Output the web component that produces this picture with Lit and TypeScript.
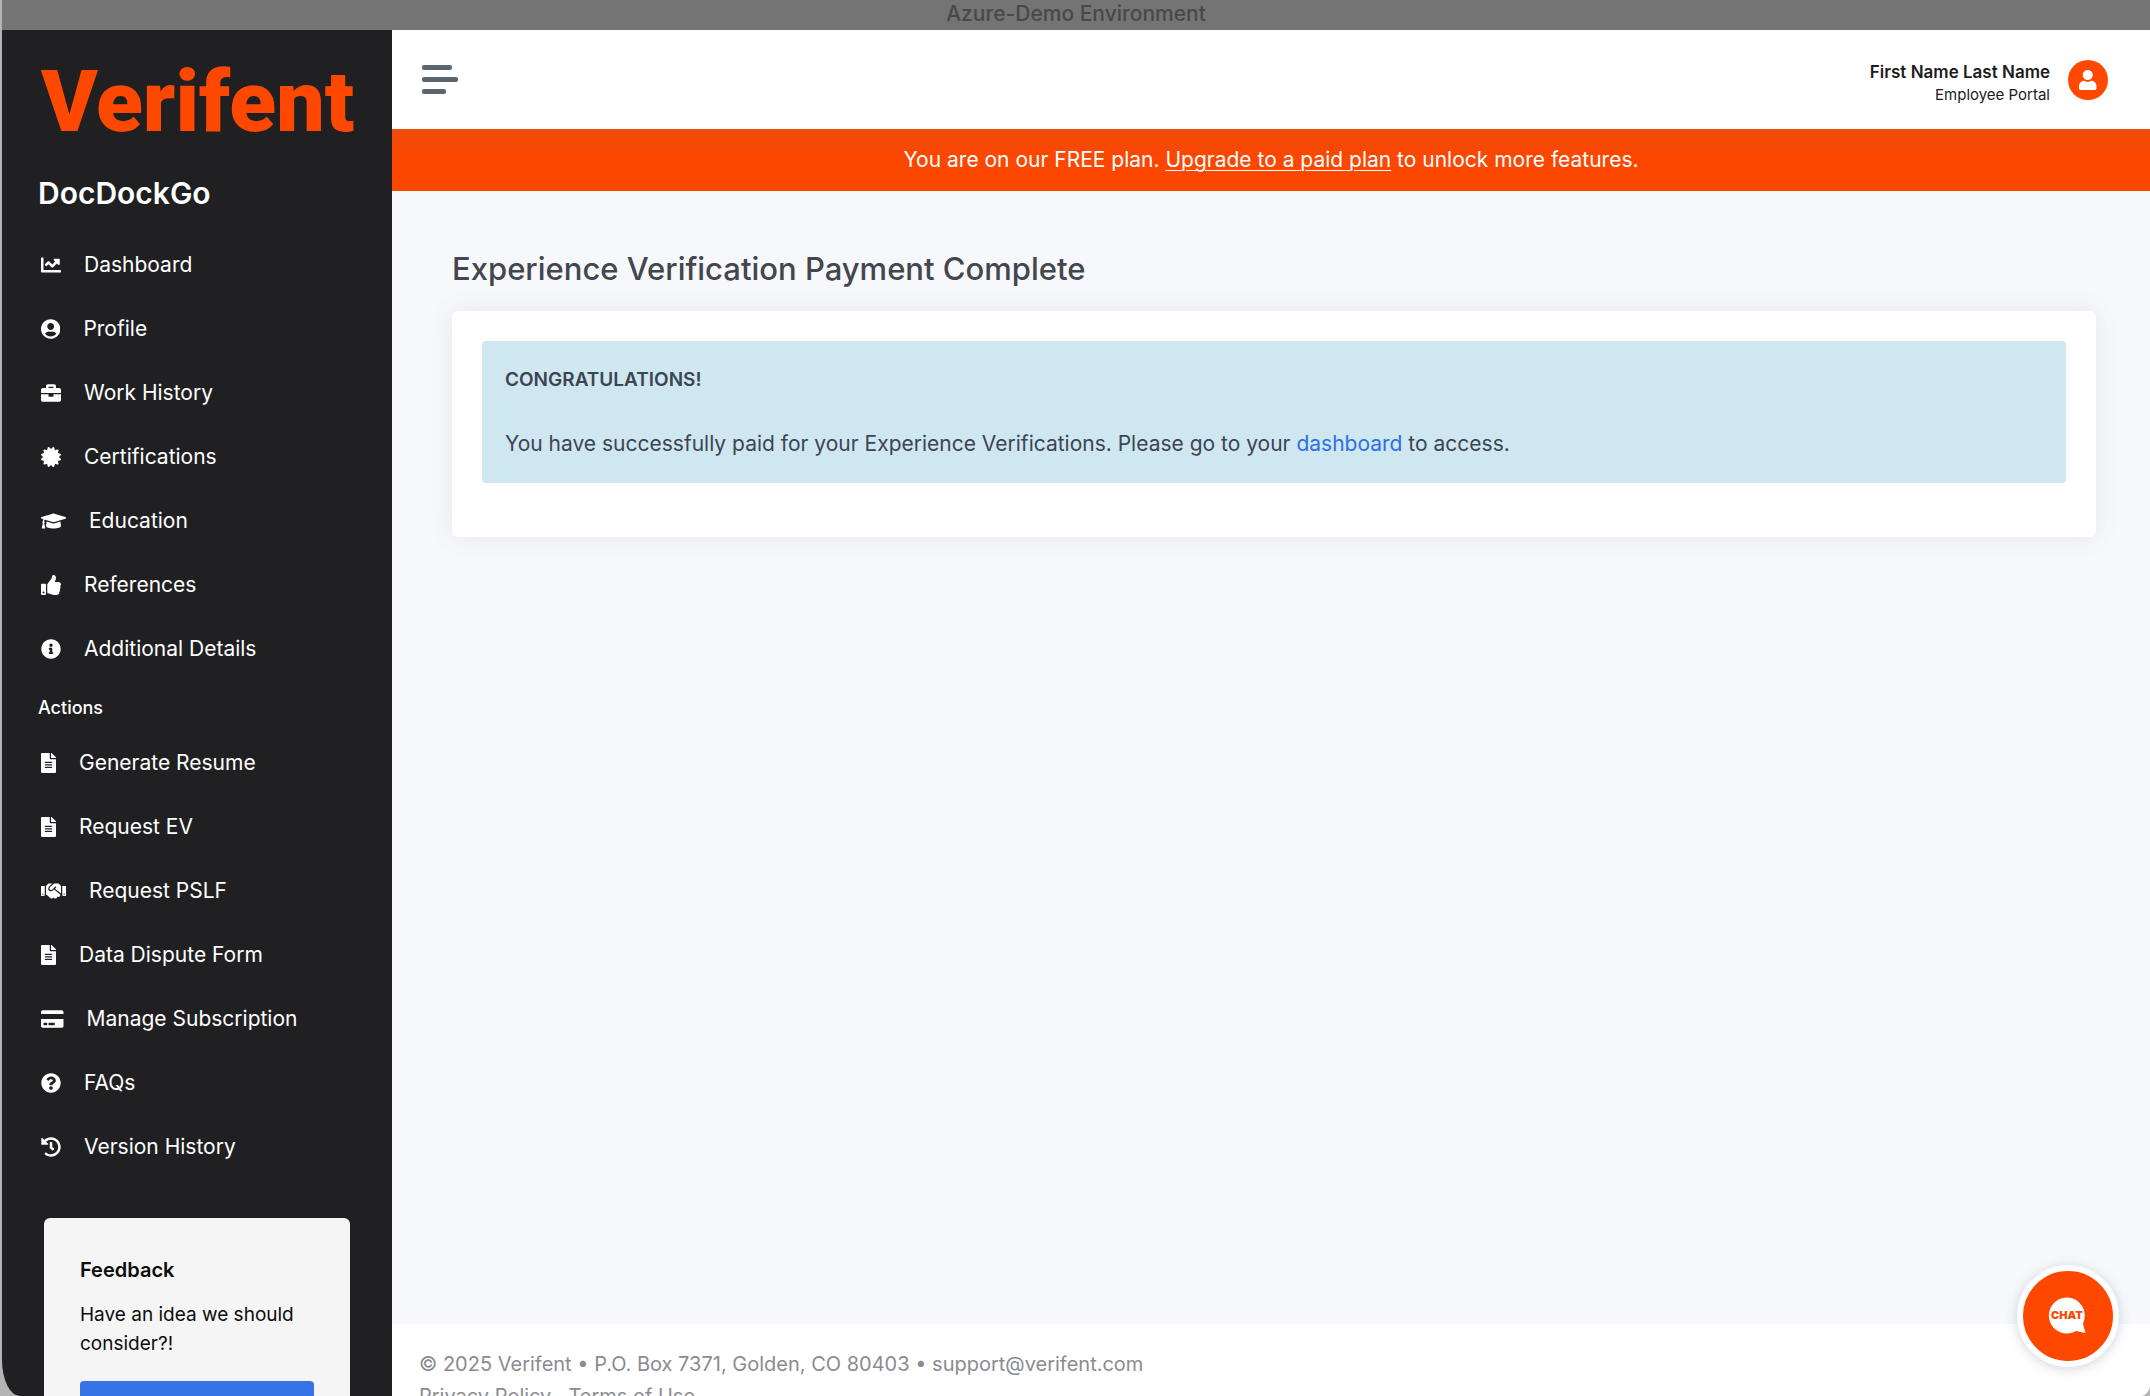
import { LitElement, html, css, svg } from "lit";
import { customElement } from "lit/decorators.js";

type Icon = { w: number; d: string };

const ICONS: Record<string, Icon> = {
  chart: { w: 512, d: "M496 384H64V80c0-8.84-7.16-16-16-16H16C7.16 64 0 71.16 0 80v336c0 17.67 14.33 32 32 32h464c8.84 0 16-7.16 16-16v-32c0-8.84-7.16-16-16-16zM464 96H345.94c-21.38 0-32.09 25.85-16.97 40.97l32.4 32.4L288 242.75l-73.37-73.37c-12.5-12.5-32.76-12.5-45.25 0l-68.69 68.69c-6.25 6.25-6.25 16.38 0 22.63l22.62 22.62c6.25 6.25 16.38 6.25 22.63 0L192 237.25l73.37 73.37c12.5 12.5 32.76 12.5 45.25 0l96-96 32.4 32.4c15.12 15.12 40.97 4.41 40.97-16.97V112c.01-8.84-7.15-16-15.99-16z" },
  profile: { w: 496, d: "M248 8C111 8 0 119 0 256s111 248 248 248 248-111 248-248S385 8 248 8zm0 96c48.6 0 88 39.4 88 88s-39.4 88-88 88-88-39.4-88-88 39.4-88 88-88zm0 344c-58.7 0-111.3-26.6-146.5-68.2 18.8-35.4 55.6-59.8 98.5-59.8 2.4 0 4.8.4 7.1 1.1 13 4.2 26.6 6.9 40.9 6.9 14.3 0 28-2.7 40.9-6.9 2.3-.7 4.7-1.1 7.1-1.1 42.9 0 79.7 24.4 98.5 59.8C359.3 421.4 306.7 448 248 448z" },
  briefcase: { w: 512, d: "M320 336c0 8.84-7.16 16-16 16h-96c-8.84 0-16-7.16-16-16v-48H0v144c0 25.6 22.4 48 48 48h416c25.6 0 48-22.4 48-48V288H320v48zm144-208h-80V80c0-25.6-22.4-48-48-48H176c-25.6 0-48 22.4-48 48v48H48c-25.6 0-48 22.4-48 48v80h512v-80c0-25.6-22.4-48-48-48zm-144 0H192V96h128v32z" },
  certificate: { w: 512, d: "M458.622 255.92l45.985-45.005c13.708-12.977 7.316-36.039-10.664-40.339l-62.65-15.99 17.661-62.015c4.991-17.838-11.829-34.663-29.661-29.671l-61.994 17.667-15.984-62.671C337.085.197 313.765-6.276 300.99 7.228L256 53.57 211.011 7.229c-12.63-13.351-36.047-7.234-40.325 10.668l-15.984 62.671-61.995-17.667C74.87 57.907 58.056 74.738 63.046 92.572l17.661 62.015-62.65 15.99C.069 174.878-6.31 197.944 7.392 210.915l45.985 45.005-45.985 45.004c-13.708 12.977-7.316 36.039 10.664 40.339l62.65 15.99-17.661 62.015c-4.991 17.838 11.829 34.663 29.661 29.671l61.994-17.667 15.984 62.671c4.439 18.575 27.696 24.018 40.325 10.668L256 458.61l44.989 46.001c12.5 13.488 35.987 7.486 40.325-10.668l15.984-62.671 61.994 17.667c17.836 4.994 34.651-11.837 29.661-29.671l-17.661-62.015 62.65-15.99c17.987-4.302 24.366-27.367 10.664-40.339l-45.984-45.004z" },
  education: { w: 640, d: "M622.34 153.2L343.4 67.5c-15.2-4.67-31.6-4.67-46.79 0L17.66 153.2c-23.54 7.23-23.54 38.36 0 45.59l48.63 14.94c-10.67 13.19-17.23 29.28-17.88 46.9C38.78 266.15 32 276.11 32 288c0 10.78 5.68 19.85 13.86 25.65L20.33 428.53C18.11 438.52 25.71 448 35.94 448h56.11c10.24 0 17.84-9.48 15.62-19.47L82.14 313.65C90.32 307.85 96 298.78 96 288c0-11.57-6.47-21.25-15.66-26.87.76-15.02 8.44-28.3 20.69-36.72L296.6 284.5c9.06 2.78 26.44 6.25 46.79 0l278.95-85.7c23.55-7.24 23.55-38.36 0-45.6zM352.79 315.09c-28.53 8.76-52.84 3.92-65.59 0l-145.02-44.55L128 384c0 35.35 85.96 64 192 64s192-28.65 192-64l-14.18-113.47-145.03 44.56z" },
  thumb: { w: 512, d: "M104 224H24c-13.255 0-24 10.745-24 24v240c0 13.255 10.745 24 24 24h80c13.255 0 24-10.745 24-24V248c0-13.255-10.745-24-24-24zM64 472c-13.255 0-24-10.745-24-24s10.745-24 24-24 24 10.745 24 24-10.745 24-24 24zM384 81.452c0 42.416-25.97 66.208-33.277 94.548h101.723c33.397 0 59.397 27.746 59.553 58.098.084 17.938-7.546 37.249-19.439 49.197l-.11.11c9.836 23.337 8.237 56.037-9.308 79.469 8.681 25.895-.069 57.704-16.382 74.757 4.298 17.598 2.244 32.575-6.148 44.632C440.202 511.587 389.616 512 346.839 512l-2.845-.001c-48.287-.017-87.806-17.598-119.56-31.725-15.957-7.099-36.821-15.887-52.651-16.178-6.54-.12-11.783-5.457-11.783-11.998v-213.77c0-3.2 1.282-6.271 3.558-8.521 39.614-39.144 56.648-80.587 89.117-113.111 14.804-14.832 20.188-37.236 25.393-58.902C282.515 39.293 291.817 0 312 0c24 0 72 8 72 81.452z" },
  info: { w: 512, d: "M256 8C119.043 8 8 119.083 8 256c0 136.997 111.043 248 248 248s248-111.003 248-248C504 119.083 392.957 8 256 8zm0 110c23.196 0 42 18.804 42 42s-18.804 42-42 42-42-18.804-42-42 18.804-42 42-42zm56 254c0 6.627-5.373 12-12 12h-88c-6.627 0-12-5.373-12-12v-24c0-6.627 5.373-12 12-12h12v-64h-12c-6.627 0-12-5.373-12-12v-24c0-6.627 5.373-12 12-12h64c6.627 0 12 5.373 12 12v100h12c6.627 0 12 5.373 12 12v24z" },
  file: { w: 384, d: "M224 136V0H24C10.7 0 0 10.7 0 24v464c0 13.3 10.7 24 24 24h336c13.3 0 24-10.7 24-24V160H248c-13.2 0-24-10.8-24-24zm64 236c0 6.6-5.4 12-12 12H108c-6.6 0-12-5.4-12-12v-8c0-6.6 5.4-12 12-12h168c6.6 0 12 5.4 12 12v8zm0-64c0 6.6-5.4 12-12 12H108c-6.6 0-12-5.4-12-12v-8c0-6.6 5.4-12 12-12h168c6.6 0 12 5.4 12 12v8zm0-72v8c0 6.6-5.4 12-12 12H108c-6.6 0-12-5.4-12-12v-8c0-6.6 5.4-12 12-12h168c6.6 0 12 5.4 12 12zm96-114.1v6.1H256V0h6.1c6.4 0 12.5 2.5 17 7l97.9 98c4.5 4.5 7 10.6 7 16.9z" },
  handshake: { w: 640, d: "M434.7 64h-85.9c-8 0-15.7 3-21.6 8.4l-98.3 90c-.1.1-.2.3-.3.4-16.6 15.6-16.3 40.5-2.1 56 12.7 13.9 39.4 17.6 56.1 2.7.1-.1.3-.1.4-.2l79.9-73.2c6.5-5.9 16.7-5.5 22.6 1 6 6.5 5.5 16.6-1 22.6l-26.1 23.9L504 313.8c2.9 2.4 5.5 5 7.9 7.7V128l-54.6-54.6c-5.9-6-14.1-9.4-22.6-9.4zM544 128.2v223.9c0 17.7 14.3 32 32 32h64V128.2h-96zm48 223.9c-8.8 0-16-7.2-16-16s7.2-16 16-16 16 7.2 16 16-7.2 16-16 16zM0 384h64c17.7 0 32-14.3 32-32V128.2H0V384zm48-63.9c8.8 0 16 7.2 16 16s-7.2 16-16 16-16-7.2-16-16c0-8.9 7.2-16 16-16zm435.9 18.6L334.6 217.5l-30 27.5c-29.7 27.1-75.2 24.5-101.7-4.4-26.9-29.4-24.8-74.9 4.4-101.7L289.1 64h-83.8c-8.5 0-16.6 3.4-22.6 9.4L128 128v223.9h18.3l90.5 81.9c27.4 22.3 67.7 18.1 90-9.3l.2-.2 17.9 15.5c15.9 13 39.4 10.5 52.3-5.4l31.4-38.6 5.4 4.4c13.7 11.1 33.9 9.1 45-4.7l9.5-11.7c11.2-13.8 9.1-33.9-4.6-45.1z" },
  card: { w: 576, d: "M0 432c0 26.5 21.5 48 48 48h480c26.5 0 48-21.5 48-48V256H0v176zm192-68c0-6.6 5.4-12 12-12h136c6.6 0 12 5.4 12 12v40c0 6.6-5.4 12-12 12H204c-6.6 0-12-5.4-12-12v-40zm-128 0c0-6.6 5.4-12 12-12h72c6.6 0 12 5.4 12 12v40c0 6.6-5.4 12-12 12H76c-6.6 0-12-5.4-12-12v-40zM576 80v48H0V80c0-26.5 21.5-48 48-48h480c26.5 0 48 21.5 48 48z" },
  question: { w: 512, d: "M504 256c0 136.997-111.043 248-248 248S8 392.997 8 256C8 119.083 119.043 8 256 8s248 111.083 248 248zM262.655 90c-54.497 0-89.255 22.957-116.549 63.758-3.536 5.286-2.353 12.415 2.715 16.258l34.699 26.31c5.205 3.947 12.621 3.008 16.665-2.122 17.864-22.658 30.113-35.797 57.303-35.797 20.429 0 45.698 13.148 45.698 32.958 0 14.976-12.363 22.667-32.534 33.976C247.128 238.528 216 254.941 216 296v4c0 6.627 5.373 12 12 12h56c6.627 0 12-5.373 12-12v-1.333c0-28.462 83.186-29.647 83.186-106.667 0-58.002-60.165-102-116.531-102zM256 338c-25.365 0-46 20.635-46 46 0 25.364 20.635 46 46 46s46-20.636 46-46c0-25.365-20.635-46-46-46z" },
  history: { w: 512, d: "M504 255.531c.253 136.64-111.18 248.372-247.82 248.468-59.015.042-113.223-20.53-155.822-54.911-11.077-8.94-11.905-25.541-1.839-35.607l11.267-11.267c8.609-8.609 22.353-9.551 31.891-1.984C173.062 425.135 212.781 440 256 440c101.705 0 184-82.311 184-184 0-101.705-82.311-184-184-184-48.814 0-93.149 18.969-126.068 49.932l50.754 50.754c10.08 10.08 2.941 27.314-11.313 27.314H24c-8.837 0-16-7.163-16-16V38.627c0-14.254 17.234-21.393 27.314-11.314l49.372 49.372C129.209 34.136 189.552 8 256 8c136.81 0 247.747 110.78 248 247.531zm-180.912 78.784l9.823-12.63c8.138-10.463 6.253-25.542-4.21-33.679L288 256.349V152c0-13.255-10.745-24-24-24h-16c-13.255 0-24 10.745-24 24v135.651l65.409 50.874c10.463 8.137 25.541 6.253 33.679-4.21z" },
  user: { w: 448, d: "M224 256c70.7 0 128-57.3 128-128S294.7 0 224 0 96 57.3 96 128s57.3 128 128 128zM134 276c26 20 54 28 90 28s64-8 90-28c80 0 134 66 134 146v42c0 26.500-21.500 48-48 48H48c-26.500 0-48-21.500-48-48v-42c0-80 54-146 134-146z" },
};

const icon = (name: string) => {
  const i = ICONS[name];
  return html`<svg class="icon" viewBox="0 0 ${i.w} 512" aria-hidden="true">${svg`<path fill="currentColor" d=${i.d}></path>`}</svg>`;
};

const MAIN_LINKS = [
  ["chart", "Dashboard"],
  ["profile", "Profile"],
  ["briefcase", "Work History"],
  ["certificate", "Certifications"],
  ["education", "Education"],
  ["thumb", "References"],
  ["info", "Additional Details"],
];

const ACTION_LINKS = [
  ["file", "Generate Resume"],
  ["file", "Request EV"],
  ["handshake", "Request PSLF"],
  ["file", "Data Dispute Form"],
  ["card", "Manage Subscription"],
  ["question", "FAQs"],
  ["history", "Version History"],
];

@customElement("app-root")
export class AppRoot extends LitElement {
  static styles = css`
    :host {
      display: flex;
      flex-direction: column;
      height: 100vh;
      overflow: hidden;
      box-sizing: border-box;
      padding-left: 2px;
      background: #b4b4b5;
      font-family: Inter, "Liberation Sans", sans-serif;
      font-size: 21px;
      line-height: 32px;
      color: #3d4451;
    }
    * {
      box-sizing: border-box;
    }
    a {
      color: inherit;
      text-decoration: none;
    }
    h1, h2, p, ul {
      margin: 0;
      padding: 0;
    }
    ul {
      list-style: none;
    }
    .env {
      flex: none;
      height: 30px;
      line-height: 28px;
      text-align: center;
      font-weight: 500;
      color: #47484d;
      background: #747474;
    }
    .shell {
      flex: 1;
      min-height: 0;
      display: grid;
      grid-template-columns: 390px 1fr;
      overflow: hidden;
      border-radius: 0 0 10px 18px / 0 0 12px 36px;
    }
    .side {
      min-height: 0;
      overflow: hidden;
      background: #202022;
      color: #fff;
    }
    .logo {
      display: block;
      padding: 25px 0 0 39px;
      font-family: Roboto, Inter, sans-serif;
      font-size: 86px;
      line-height: 94px;
      font-weight: 900;
      color: #fe4800;
    }
    .company {
      padding: 24px 36px 0;
      font-size: 30px;
      line-height: 40px;
      font-weight: 600;
    }
    .links {
      padding-top: 20px;
    }
    .link {
      display: flex;
      align-items: center;
      gap: 23px;
      height: 64px;
      padding-left: 39px;
    }
    .icon {
      flex: none;
      height: 20px;
    }
    .group {
      padding: 11px 36px 0;
      height: 43px;
      font-size: 18px;
      font-weight: 500;
    }
    .group + .links {
      padding-top: 7px;
    }
    .feedback {
      margin: 39px 42px 0;
      padding: 36px;
      border-radius: 6px;
      background: #f5f5f5;
      color: #0c0c0c;
    }
    .feedback h2 {
      font-size: 20px;
      line-height: 32px;
      font-weight: 600;
    }
    .feedback p {
      padding: 14px 0 23px;
      font-size: 19px;
      line-height: 29px;
    }
    .send {
      width: 100%;
      height: 48px;
      border: 0;
      border-radius: 4px;
      background: #3573e6;
      color: #fff;
      font: inherit;
    }
    .page {
      min-width: 0;
      min-height: 0;
      display: flex;
      flex-direction: column;
      background: #f7f8fb;
    }
    .top {
      flex: none;
      height: 99px;
      padding: 0 42px 0 30px;
      display: flex;
      align-items: center;
      justify-content: space-between;
      background: #fff;
    }
    .burger {
      display: grid;
      gap: 7px;
      padding: 0;
      border: 0;
      background: none;
    }
    .bar {
      height: 5px;
      width: 30px;
      border-radius: 2px;
      background: #5d666f;
    }
    .bar.long {
      width: 36px;
    }
    .bar.short {
      width: 24px;
    }
    .account {
      display: flex;
      align-items: center;
      gap: 18px;
      text-align: right;
      color: #1c1c20;
    }
    .name {
      padding-top: 6px;
      font-size: 17px;
      line-height: 24px;
      font-weight: 600;
    }
    .role {
      font-size: 15px;
      line-height: 22px;
    }
    .avatar {
      display: grid;
      place-items: center;
      width: 40px;
      height: 40px;
      border-radius: 50%;
      background: #fe4800;
      color: #fff;
    }
    .plan {
      flex: none;
      padding: 15px 0;
      text-align: center;
      color: #fff;
      background: linear-gradient(#f04a0d, #fc4700 50%);
    }
    .plan a {
      text-decoration: underline;
      text-underline-offset: 3px;
      text-decoration-thickness: 1px;
    }
    .main {
      flex: 1;
      min-height: 0;
      padding: 56px 54px 0 60px;
    }
    h1 {
      font-size: 31px;
      line-height: 44px;
      font-weight: 500;
      color: #43464d;
    }
    .panel {
      margin-top: 20px;
      padding: 30px 30px 54px;
      border-radius: 6px;
      background: #fff;
      box-shadow: 0 0 24px rgba(80, 90, 140, 0.1);
    }
    .notice {
      padding: 23px;
      border-radius: 4px;
      background: #cee7f1;
    }
    .notice p + p {
      margin-top: 32px;
    }
    .strong {
      font-size: 19px;
      font-weight: 600;
    }
    .notice a {
      color: #2f6fe4;
    }
    .foot {
      flex: none;
      height: 72px;
      overflow: hidden;
      padding: 24px 27px 0;
      font-size: 20px;
      background: #fff;
      color: #8b8b90;
    }
    .chat {
      position: absolute;
      right: 31px;
      bottom: 29px;
      width: 102px;
      height: 102px;
      padding: 0;
      display: grid;
      place-items: center;
      border: 6px solid #fff;
      border-radius: 50%;
      background: #fe4800;
      box-shadow: 0 2px 12px rgba(60, 70, 110, 0.22);
    }
    .chat svg {
      width: 40px;
      height: 40px;
    }
  `;

  private links(items: string[][]) {
    return html`<ul class="links">
      ${items.map(
        ([name, label]) =>
          html`<li><a class="link" href="#">${icon(name)}<span>${label}</span></a></li>`
      )}
    </ul>`;
  }

  render() {
    return html`
      <div class="env">Azure-Demo Environment</div>
      <div class="shell">
        <nav class="side">
          <a class="logo" href="#">Verifent</a>
          <div class="company">DocDockGo</div>
          ${this.links(MAIN_LINKS)}
          <div class="group">Actions</div>
          ${this.links(ACTION_LINKS)}
          <section class="feedback">
            <h2>Feedback</h2>
            <p>Have an idea we should consider?!</p>
            <button class="send" aria-label="Feedback"></button>
          </section>
        </nav>
        <div class="page">
          <header class="top">
            <button class="burger" aria-label="Menu">
              <span class="bar"></span><span class="bar long"></span><span class="bar short"></span>
            </button>
            <div class="account">
              <div>
                <div class="name">First Name Last Name</div>
                <div class="role">Employee Portal</div>
              </div>
              <span class="avatar">${icon("user")}</span>
            </div>
          </header>
          <div class="plan">
            You are on our FREE plan. <a href="#">Upgrade to a paid plan</a> to unlock more features.
          </div>
          <main class="main">
            <h1>Experience Verification Payment Complete</h1>
            <section class="panel">
              <div class="notice">
                <p class="strong">CONGRATULATIONS!</p>
                <p>
                  You have successfully paid for your Experience Verifications. Please go to your
                  <a href="#">dashboard</a> to access.
                </p>
              </div>
            </section>
          </main>
          <footer class="foot">
            <div>© 2025 Verifent • P.O. Box 7371, Golden, CO 80403 • support@verifent.com</div>
            <div><a href="#">Privacy Policy</a> . <a href="#">Terms of Use</a></div>
          </footer>
        </div>
      </div>
      <button class="chat" aria-label="Chat">
        <svg viewBox="0 0 40 40">
          <path fill="#fff" d="M19 1.500a18 18 0 1 0 9 33.500l9.500 2-2.600-9.500A18 18 0 0 0 19 1.500z"></path>
          <text x="19" y="23" text-anchor="middle" font-family="Inter, sans-serif" font-size="11" font-weight="900" fill="#fe4800">CHAT</text>
        </svg>
      </button>
    `;
  }
}
